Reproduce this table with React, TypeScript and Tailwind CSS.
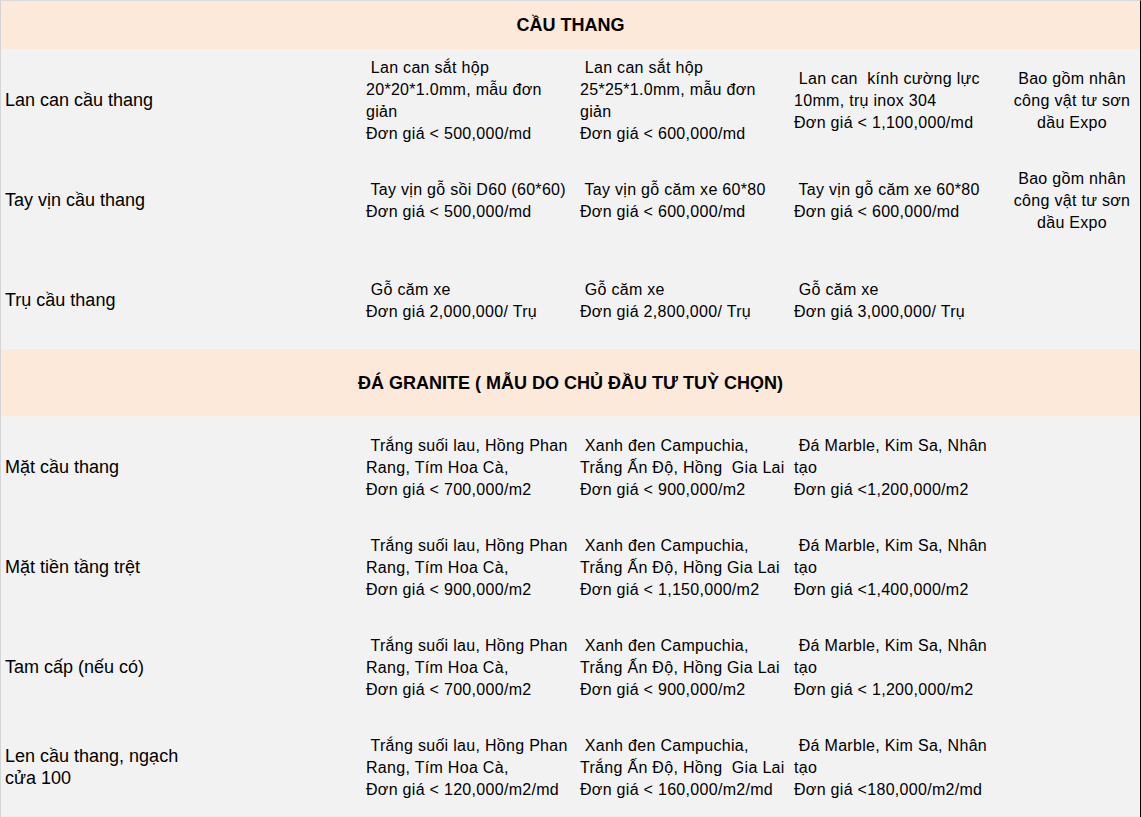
const bao = ['Bao gồm nhân', 'công vật tư sơn', 'dầu Expo']

type Row = { label: string[]; cells: string[][]; note?: string[] }

const cauThang: Row[] = [
  {
    label: ['Lan can cầu thang'],
    cells: [
      [' Lan can sắt hộp', '20*20*1.0mm, mẫu đơn', 'giản', 'Đơn giá < 500,000/md'],
      [' Lan can sắt hộp', '25*25*1.0mm, mẫu đơn', 'giản', 'Đơn giá < 600,000/md'],
      [' Lan can  kính cường lực', '10mm, trụ inox 304', 'Đơn giá < 1,100,000/md'],
    ],
    note: bao,
  },
  {
    label: ['Tay vịn cầu thang'],
    cells: [
      [' Tay vịn gỗ sồi D60 (60*60)', 'Đơn giá < 500,000/md'],
      [' Tay vịn gỗ căm xe 60*80', 'Đơn giá < 600,000/md'],
      [' Tay vịn gỗ căm xe 60*80', 'Đơn giá < 600,000/md'],
    ],
    note: bao,
  },
  {
    label: ['Trụ cầu thang'],
    cells: [
      [' Gỗ căm xe', 'Đơn giá 2,000,000/ Trụ'],
      [' Gỗ căm xe', 'Đơn giá 2,800,000/ Trụ'],
      [' Gỗ căm xe', 'Đơn giá 3,000,000/ Trụ'],
    ],
  },
]

const trang = [' Trắng suối lau, Hồng Phan', 'Rang, Tím Hoa Cà,']
const marble = [' Đá Marble, Kim Sa, Nhân', 'tạo']

const granite: Row[] = [
  {
    label: ['Mặt cầu thang'],
    cells: [
      [...trang, 'Đơn giá < 700,000/m2'],
      [' Xanh đen Campuchia,', 'Trắng Ấn Độ, Hồng  Gia Lai', 'Đơn giá < 900,000/m2'],
      [...marble, 'Đơn giá <1,200,000/m2'],
    ],
  },
  {
    label: ['Mặt tiền tầng trệt'],
    cells: [
      [...trang, 'Đơn giá < 900,000/m2'],
      [' Xanh đen Campuchia,', 'Trắng Ấn Độ, Hồng Gia Lai', 'Đơn giá < 1,150,000/m2'],
      [...marble, 'Đơn giá <1,400,000/m2'],
    ],
  },
  {
    label: ['Tam cấp (nếu có)'],
    cells: [
      [...trang, 'Đơn giá < 700,000/m2'],
      [' Xanh đen Campuchia,', 'Trắng Ấn Độ, Hồng Gia Lai', 'Đơn giá < 900,000/m2'],
      [...marble, 'Đơn giá < 1,200,000/m2'],
    ],
  },
  {
    label: ['Len cầu thang, ngạch', 'cửa 100'],
    cells: [
      [...trang, 'Đơn giá < 120,000/m2/md'],
      [' Xanh đen Campuchia,', 'Trắng Ấn Độ, Hồng  Gia Lai', 'Đơn giá < 160,000/m2/md'],
      [...marble, 'Đơn giá <180,000/m2/md'],
    ],
  },
]

function Lines({ lines, center }: { lines: string[]; center?: boolean }) {
  return (
    <div className={center ? 'text-center' : ''}>
      {lines.map((l, i) => (
        <div key={i} className="whitespace-pre">
          {l}
        </div>
      ))}
    </div>
  )
}

function SectionHeader({ title, tall }: { title: string; tall?: boolean }) {
  return (
    <div
      className={`flex items-center justify-center bg-[#fde9d9] text-[18px] font-bold ${tall ? 'h-[67px]' : 'h-[48px]'}`}
    >
      {title}
    </div>
  )
}

function DataRow({ row }: { row: Row }) {
  return (
    <div className="grid h-[100px] grid-cols-[361px_214px_214px_214px_1fr] items-center pt-[4px]">
      <div className="pb-[2px] pl-1 text-[18px]">
        <Lines lines={row.label} />
      </div>
      {row.cells.map((c, i) => (
        <div key={i} className="pl-1 tracking-[0.3px]">
          <Lines lines={c} />
        </div>
      ))}
      <div className="tracking-[0.3px]">{row.note && <Lines lines={row.note} center />}</div>
    </div>
  )
}

export default function App() {
  return (
    <div className="h-[817px] w-[1141px] overflow-hidden bg-[#f2f2f2]">
      <div className="border-t border-l border-r border-t-[#d9d9d9] border-l-[#d4d4d4] border-r-black font-['Liberation_Sans',Arial,sans-serif] text-[16px] leading-[22px] text-black">
        <SectionHeader title="CẦU THANG" />
        {cauThang.map((r, i) => (
          <DataRow key={i} row={r} />
        ))}
        <SectionHeader title="ĐÁ GRANITE ( MẪU DO CHỦ ĐẦU TƯ TUỲ CHỌN)" tall />
        {granite.map((r, i) => (
          <DataRow key={i} row={r} />
        ))}
        <div className="h-[48px] bg-[#fde9d9]" />
      </div>
    </div>
  )
}
